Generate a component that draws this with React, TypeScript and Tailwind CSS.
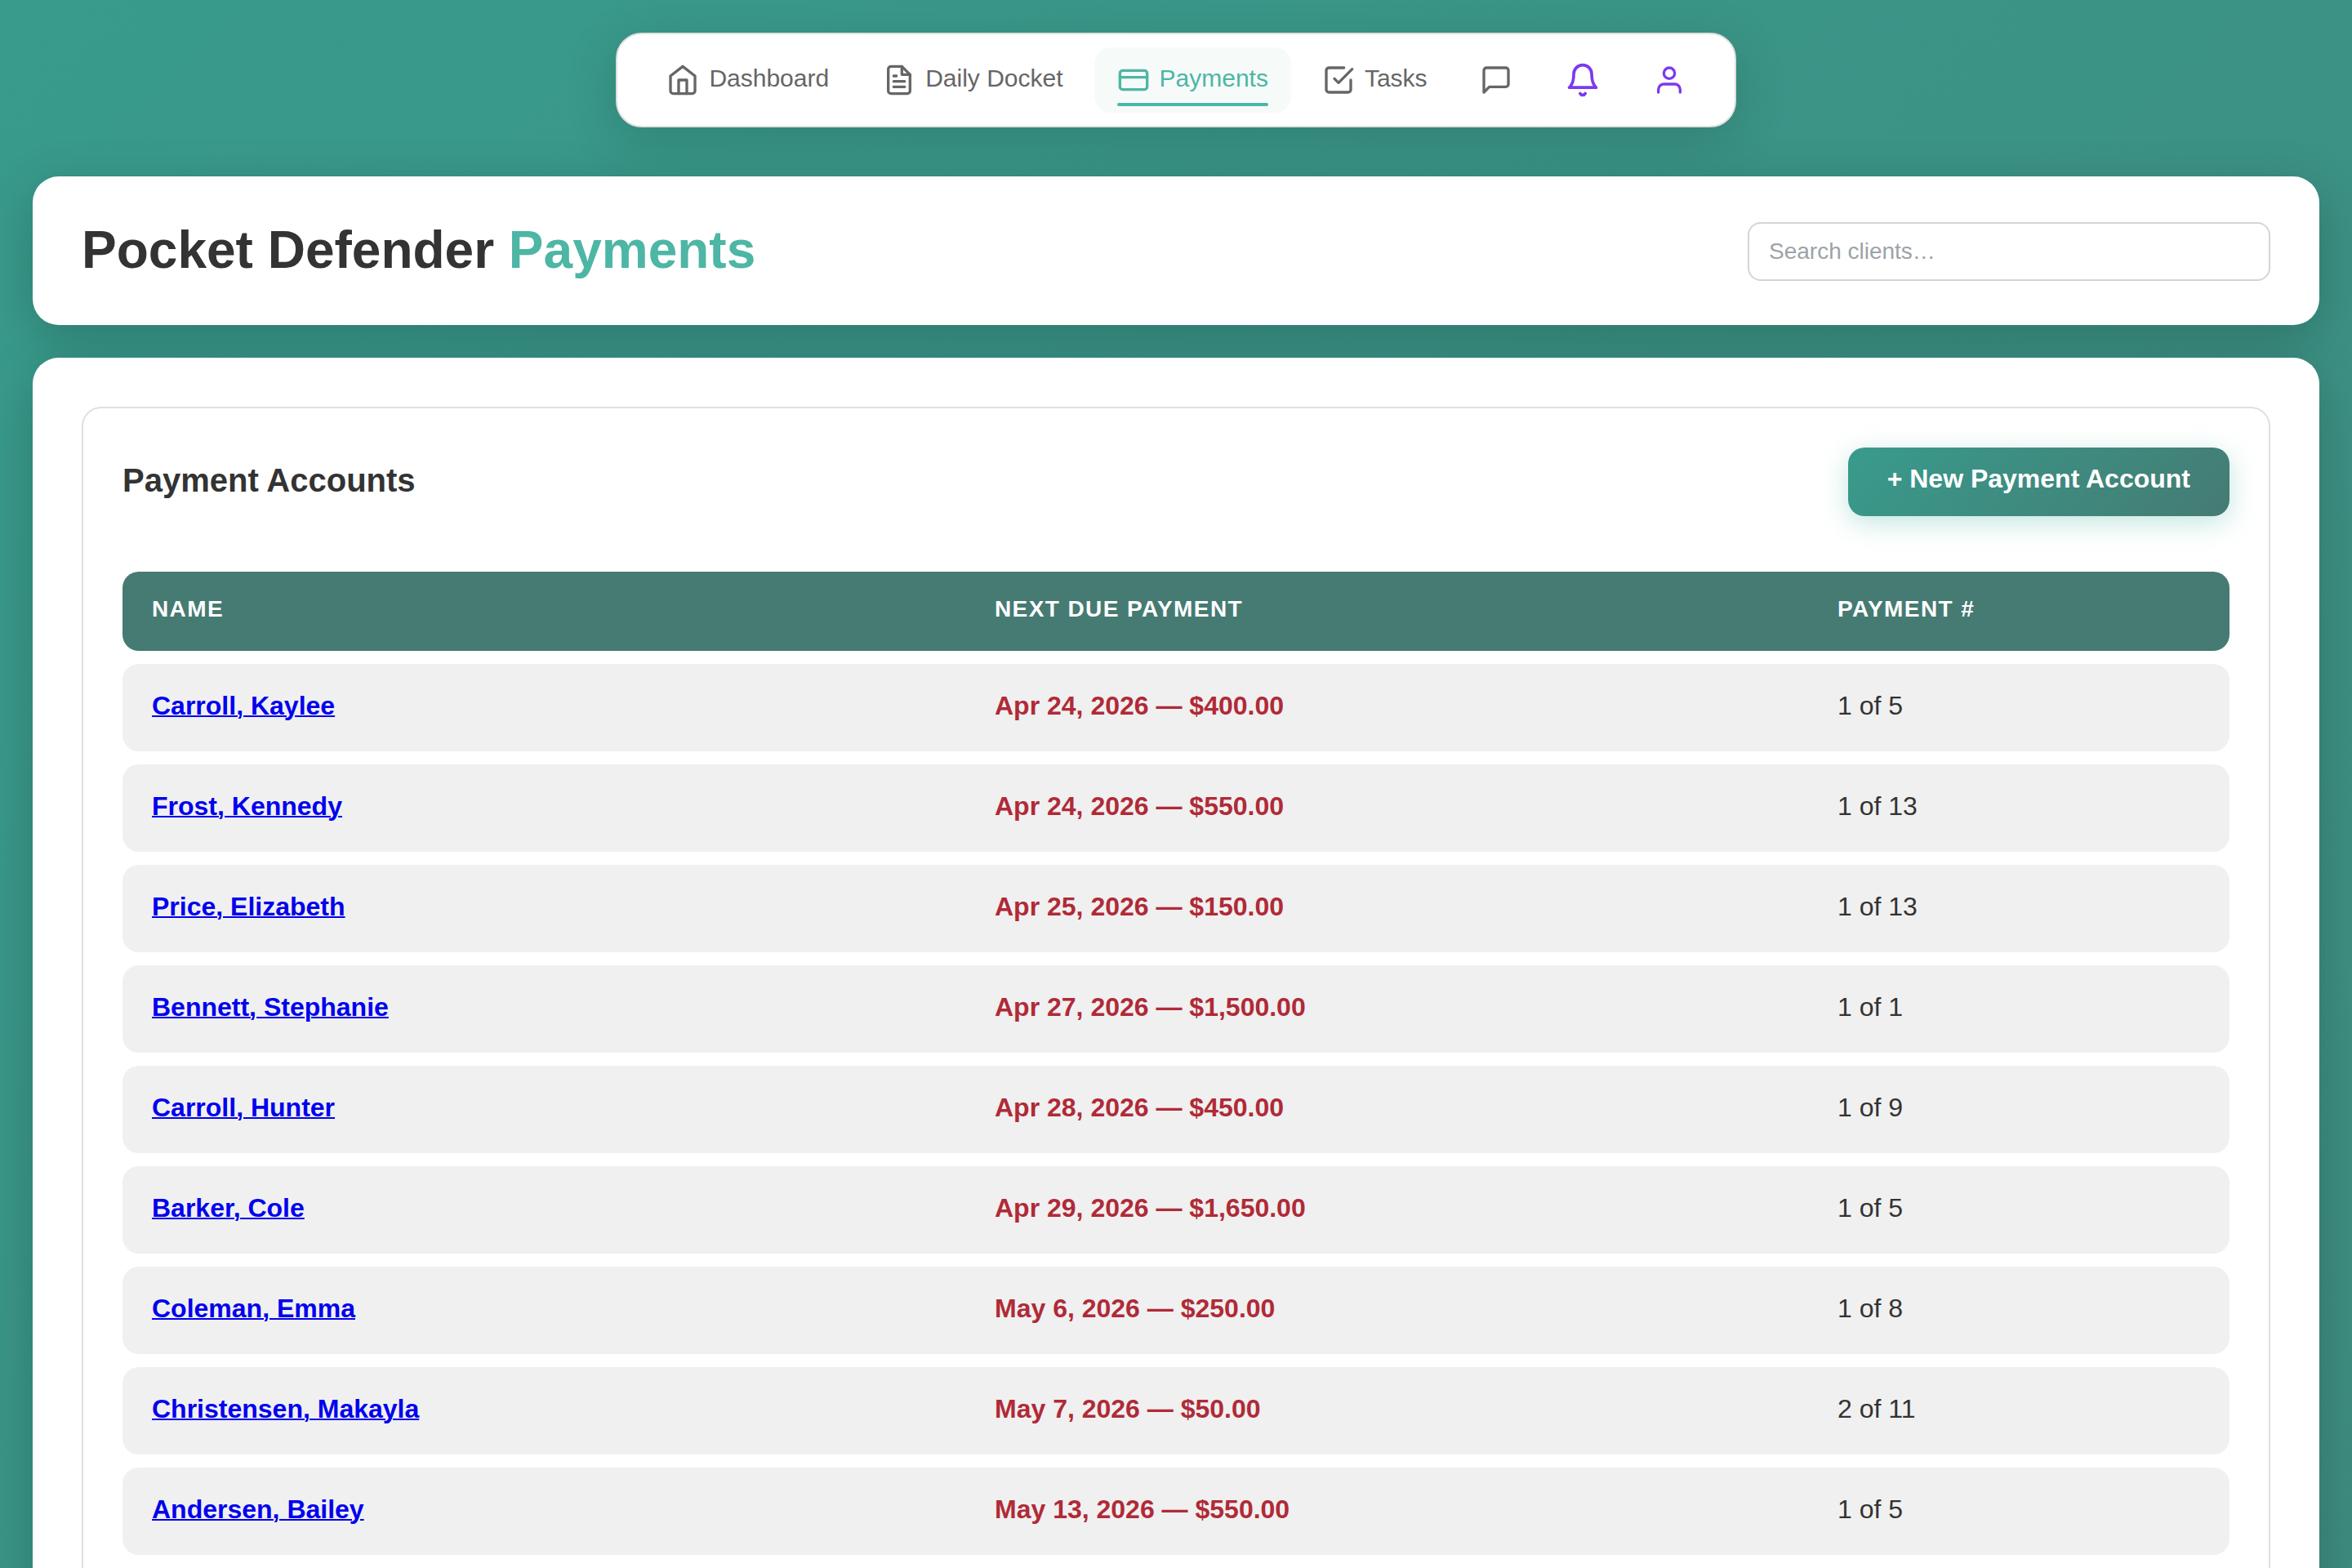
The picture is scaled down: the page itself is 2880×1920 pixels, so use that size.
import React from 'react';

interface IconProps {
  className?: string;
  children: React.ReactNode;
}

const Icon: React.FC<IconProps> = ({ className = 'size-10', children }) => (
  <svg
    viewBox="0 0 24 24"
    fill="none"
    stroke="currentColor"
    strokeWidth="2"
    strokeLinecap="round"
    strokeLinejoin="round"
    aria-hidden="true"
    className={`shrink-0 ${className}`}
  >
    {children}
  </svg>
);

interface NavItem {
  label: string;
  active?: boolean;
  icon: React.ReactNode;
}

const navItems: NavItem[] = [
  {
    label: 'Dashboard',
    icon: (
      <Icon>
        <path d="M3 9l9-7 9 7v11a2 2 0 0 1-2 2H5a2 2 0 0 1-2-2z" />
        <polyline points="9 22 9 12 15 12 15 22" />
      </Icon>
    ),
  },
  {
    label: 'Daily Docket',
    icon: (
      <Icon>
        <path d="M14 2H6a2 2 0 0 0-2 2v16a2 2 0 0 0 2 2h12a2 2 0 0 0 2-2V8z" />
        <polyline points="14 2 14 8 20 8" />
        <line x1="16" y1="13" x2="8" y2="13" />
        <line x1="16" y1="17" x2="8" y2="17" />
        <polyline points="10 9 9 9 8 9" />
      </Icon>
    ),
  },
  {
    label: 'Payments',
    active: true,
    icon: (
      <Icon>
        <rect x="2" y="5" width="20" height="14" rx="2" />
        <line x1="2" y1="10" x2="22" y2="10" />
      </Icon>
    ),
  },
  {
    label: 'Tasks',
    icon: (
      <Icon>
        <polyline points="9 11 12 14 22 4" />
        <path d="M21 12v7a2 2 0 0 1-2 2H5a2 2 0 0 1-2-2V5a2 2 0 0 1 2-2h11" />
      </Icon>
    ),
  },
];

interface Account {
  name: string;
  due: string;
  count: string;
}

const accounts: Account[] = [
  { name: 'Carroll, Kaylee', due: 'Apr 24, 2026 — $400.00', count: '1 of 5' },
  { name: 'Frost, Kennedy', due: 'Apr 24, 2026 — $550.00', count: '1 of 13' },
  { name: 'Price, Elizabeth', due: 'Apr 25, 2026 — $150.00', count: '1 of 13' },
  { name: 'Bennett, Stephanie', due: 'Apr 27, 2026 — $1,500.00', count: '1 of 1' },
  { name: 'Carroll, Hunter', due: 'Apr 28, 2026 — $450.00', count: '1 of 9' },
  { name: 'Barker, Cole', due: 'Apr 29, 2026 — $1,650.00', count: '1 of 5' },
  { name: 'Coleman, Emma', due: 'May 6, 2026 — $250.00', count: '1 of 8' },
  { name: 'Christensen, Makayla', due: 'May 7, 2026 — $50.00', count: '2 of 11' },
  { name: 'Andersen, Bailey', due: 'May 13, 2026 — $550.00', count: '1 of 5' },
];

const NavBar: React.FC = () => (
  <nav className="mx-auto flex w-fit items-center gap-2 rounded-[32px] border-2 border-[#e0e0e0] bg-white px-8 py-4 text-[30px] leading-[34px] text-[#666666] shadow-[0_16px_64px_rgba(0,0,0,0.15)]">
    <div className="flex items-center gap-[10px]">
      {navItems.map((item) => (
        <a
          key={item.label}
          href="#"
          className={
            item.active
              ? 'relative flex items-center gap-3 rounded-[20px] bg-[#f6faf9] px-7 py-5 text-[#4db6a5]'
              : 'relative flex items-center gap-3 rounded-[20px] px-7 py-5'
          }
        >
          {item.icon}
          <span className="pb-1">{item.label}</span>
          {item.active && (
            <span className="absolute inset-x-7 bottom-2 h-1 rounded-full bg-[#4db6a5]" />
          )}
        </a>
      ))}
    </div>

    {/* Icon only actions */}
    <a href="#" aria-label="Messages" className="px-7 py-5">
      <Icon>
        <path d="M21 15a2 2 0 0 1-2 2H7l-4 4V5a2 2 0 0 1 2-2h14a2 2 0 0 1 2 2z" />
      </Icon>
    </a>
    <button type="button" aria-label="Notifications" className="px-7 text-[#7c3aed]">
      <Icon className="size-11">
        <path d="M18 8A6 6 0 0 0 6 8c0 7-3 9-3 9h18s-3-2-3-9" />
        <path d="M13.73 21a2 2 0 0 1-3.46 0" />
      </Icon>
    </button>
    <button type="button" aria-label="Profile" className="px-7 text-[#7c3aed]">
      <Icon>
        <path d="M20 21v-2a4 4 0 0 0-4-4H8a4 4 0 0 0-4 4v2" />
        <circle cx="12" cy="7" r="4" />
      </Icon>
    </button>
  </nav>
);

const AccountsTable: React.FC = () => (
  <table className="-my-4 w-full table-fixed border-separate border-spacing-x-0 border-spacing-y-4 text-left text-[32px] leading-[35px]">
    <thead>
      <tr className="bg-[#457b73] text-[28px] tracking-wider text-white uppercase">
        <th scope="col" className="w-[40%] rounded-l-[20px] px-9 pt-7 pb-[34px] font-bold">
          Name
        </th>
        <th scope="col" className="w-[40%] px-9 pt-7 pb-[34px] font-bold">
          Next Due Payment
        </th>
        <th scope="col" className="w-[20%] rounded-r-[20px] px-9 pt-7 pb-[34px] font-bold">
          Payment #
        </th>
      </tr>
    </thead>
    <tbody>
      {accounts.map((account) => (
        <tr key={account.name} className="bg-[#f0f0f0] text-[#333333]">
          <td className="rounded-l-[20px] px-9 pt-[34px] pb-[38px] font-bold">
            <a href="#" className="text-[#0000ee] underline decoration-2">
              {account.name}
            </a>
          </td>
          <td className="px-9 pt-[34px] pb-[38px] font-bold text-[#b02a37]">{account.due}</td>
          <td className="rounded-r-[20px] px-9 pt-[34px] pb-[38px]">{account.count}</td>
        </tr>
      ))}
    </tbody>
  </table>
);

const App: React.FC = () => {
  return (
    <div className="min-h-screen bg-linear-[135deg] from-[#389b8c] to-[#3e8c80] px-10 py-10 font-['Liberation_Sans',Arial,sans-serif] text-[#333333]">
      <NavBar />

      {/* Page header */}
      <header className="mt-[60px] flex items-center justify-between rounded-[32px] bg-white px-[60px] pt-14 pb-[54px] shadow-[0_16px_64px_rgba(0,0,0,0.2)]">
        <h1 className="pb-1 text-[64px] leading-[68px] font-bold">
          Pocket Defender <span className="text-[#4db6a5]">Payments</span>
        </h1>
        <input
          type="search"
          aria-label="Search clients"
          placeholder="Search clients…"
          className="h-[72px] w-[640px] rounded-2xl border-2 border-[#d1d5db] bg-white px-6 text-[28px] placeholder:text-[#9ca3a8]"
        />
      </header>

      {/* Accounts */}
      <main className="mt-10 rounded-[32px] bg-white p-[60px] shadow-[0_16px_64px_rgba(0,0,0,0.2)]">
        <section className="rounded-3xl border-2 border-[#e0e0e0] p-12">
          <div className="mb-[68px] flex items-center justify-between">
            <h2 className="pb-1 text-[40px] leading-[44px] font-bold">Payment Accounts</h2>
            <button
              type="button"
              className="rounded-[20px] bg-linear-[135deg] from-[#389b8c] to-[#457b73] px-12 pt-5 pb-7 text-[32px] leading-9 font-bold text-white shadow-[0_8px_32px_rgba(77,182,165,0.35)]"
            >
              + New Payment Account
            </button>
          </div>
          <AccountsTable />
        </section>
      </main>
    </div>
  );
};

export default App;
